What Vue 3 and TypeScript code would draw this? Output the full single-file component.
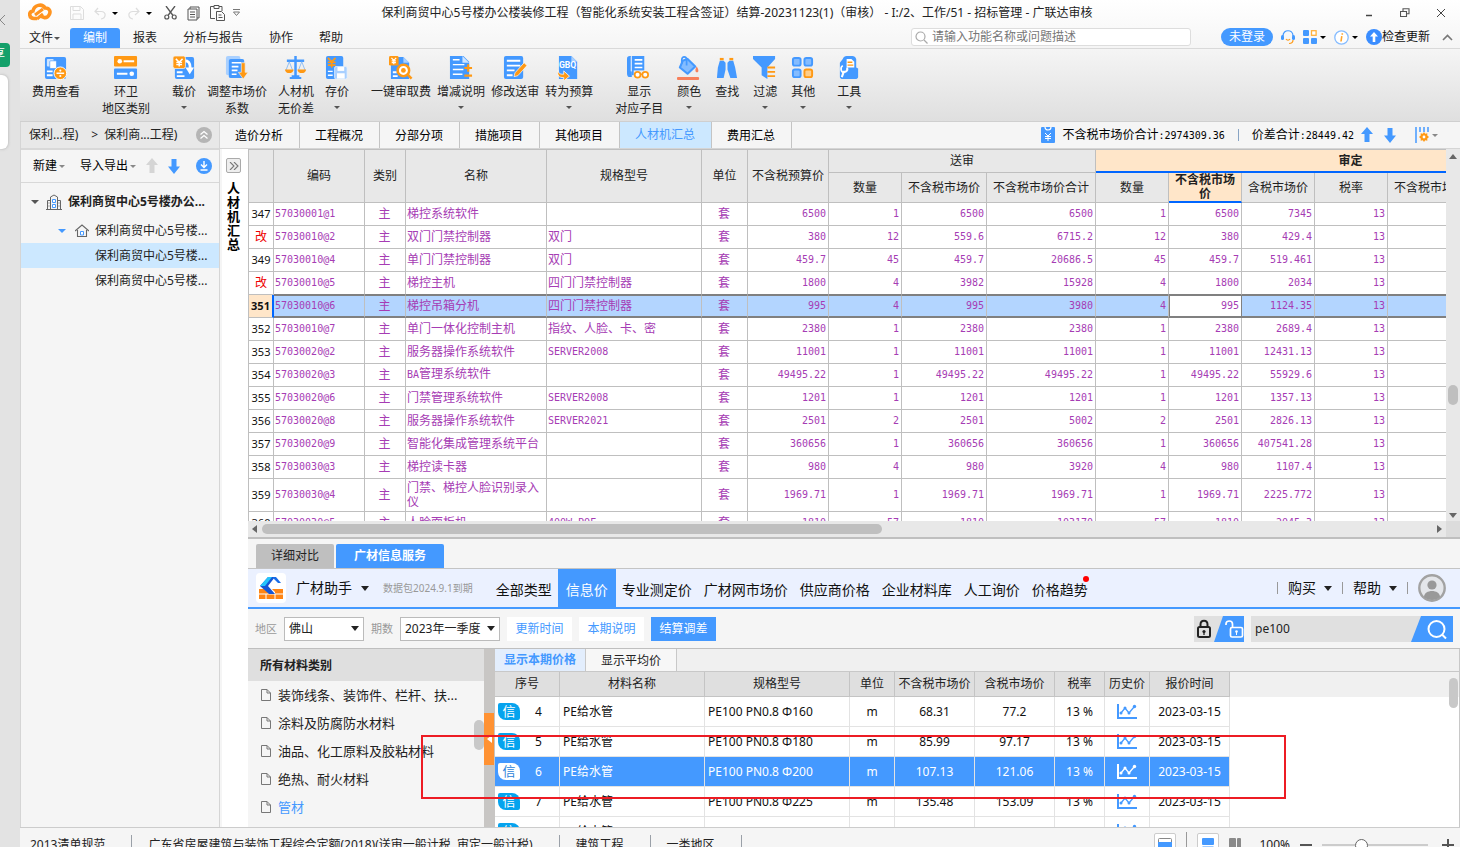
<script setup lang="ts">
import { ref } from 'vue'

interface Tool { label: string; sub?: string; icon: string; menu?: boolean }
interface MaterialRow {
  no: string
  code: string
  name: string
  latin?: string
  spec: string
  v: string[]
  changed?: boolean
  current?: boolean
  beforeCurrent?: boolean
  tall?: boolean
}
interface PriceRow { no: number; name: string; spec: string; unit: string; net: string; gross: string; rate: string; date: string; active?: boolean }

const B = '#4499ff'
const O = '#ff9914'

const glyphs: Record<string, string> = {
  view: `<rect x="1" y="1" width="22" height="23" rx="2" fill="${B}"/><rect x="3" y="3" width="7" height="8" rx="1" fill="#cfe5ff"/><rect x="6" y="5" width="7" height="8" rx="1" fill="#fff" stroke="${B}" stroke-width=".7"/><path d="M3 16h6M3 20h6" stroke="#fff" stroke-width="2"/><circle cx="17" cy="18" r="6.6" fill="${O}" stroke="#fff"/><path d="M13 18h8" stroke="#fff" stroke-width="1.6"/><circle cx="17" cy="15.2" r="1.1" fill="#fff"/><circle cx="17" cy="20.8" r="1.1" fill="#fff"/>`,
  region: `<rect width="24" height="11" rx="1" fill="${O}"/><rect y="13" width="24" height="11" rx="1" fill="${B}"/><circle cx="6" cy="5.5" r="2.4" fill="#fff"/><path d="M10 5.5h11M3 18.500h11" stroke="#fff" stroke-width="2"/><circle cx="18.500" cy="18.500" r="2.400" fill="#fff"/>`,
  load: `<rect x="3" y="1" width="20" height="23" rx="2" fill="${B}"/><path d="M5 17h6M5 21h8" stroke="#fff" stroke-width="2"/><path d="M13 5c5 0 6 3 6 8" fill="none" stroke="#fff" stroke-width="3"/><path d="M14 12h9l-4.500 7z" fill="#fff"/><rect x="1" y="0" width="13" height="13" rx="2" fill="${O}" stroke="#f2f2f2" stroke-width=".8"/><path d="M4 3l3.500 3.500L11 3M7.500 6.500V11M4.500 6.800h6M4.500 9h6" fill="none" stroke="#fff" stroke-width="1.500"/>`,
  adjust: `<rect x="1" y="0" width="15" height="20" rx="2" fill="#a9d0ff"/><rect x="4" y="3" width="16" height="20" rx="2" fill="${B}"/><path d="M7 7h10M7 11h7M7 15h6M7 19h5" stroke="#fff" stroke-width="1.700"/><path d="M17 7h4v10h3l-5 7-5-7h3z" fill="${O}" stroke="#eee" stroke-width=".7"/>`,
  balance: `<path d="M12 0v22M3 5h18" stroke="${B}" stroke-width="2.600"/><path d="M6 23h12M8 21h8" stroke="${B}" stroke-width="2"/><path d="M5.500 6L2 15M5.500 6l3.500 9M18.500 6L15 15m3.500-9L22 15" stroke="#84b8f5" stroke-width=".9" fill="none"/><path d="M1 14h9c0 5-9 5-9 0zM14 14h9c0 5-9 5-9 0z" fill="${O}"/>`,
  save: `<rect x="1" y="0" width="18" height="24" rx="2" fill="${B}"/><path d="M3 2l4 4 4-4M7 6v6M3 6.500h8M3 9.500h8" fill="none" stroke="${O}" stroke-width="1.800"/><path d="M3 16h5M3 20h5" stroke="#fff" stroke-width="1.500"/><rect x="10" y="11" width="13" height="13" rx="1.500" fill="#a9d0ff" stroke="#e8f2ff" stroke-width=".8"/><rect x="13" y="11.500" width="7" height="4" fill="#fff"/><rect x="12.500" y="18" width="8" height="5.500" fill="#fff"/>`,
  audit: `<path d="M2 1h13l6 6v17H2z" fill="${B}"/><path d="M15 1v6h6z" fill="#a9d0ff"/><path d="M4 17h4M4 21h5" stroke="#fff" stroke-width="2"/><circle cx="15" cy="15" r="6" fill="#fff" stroke="${O}" stroke-width="2.600"/><circle cx="15" cy="15" r="2.500" fill="${O}"/><path d="M19 19l4.500 4.500" stroke="${O}" stroke-width="2.600"/><rect x="0" y="0" width="10" height="10" rx="1.500" fill="${O}"/><path d="M2.500 2L5 4.500 7.500 2M5 4.500V8.500M2.800 5h4.400M2.800 6.900h4.400" fill="none" stroke="#fff" stroke-width="1.200"/>`,
  note: `<path d="M1 0h14l6 6v18H1z" fill="${B}"/><path d="M14 0v7h7z" fill="#cfe5ff"/><path d="M4 4h7M4 9h12M4 14h11M4 19h10" stroke="#fff" stroke-width="1.500"/><path d="M16 12.500h8M20 8.500v8M16 20.500h8" stroke="${O}" stroke-width="2.200"/>`,
  edit: `<rect x="1" y="0" width="20" height="24" rx="2" fill="${B}"/><path d="M4 5h14M4 10h14M4 15h8M4 20h6" stroke="#fff" stroke-width="2"/><path d="M22 7l3 3-9.500 10.500-4 1 1-4z" fill="${O}" stroke="#fff" stroke-width=".7"/>`,
  convert: `<path d="M2 0h13l6 6v18H2z" fill="${B}"/><path d="M15 0v6h6z" fill="#a9d0ff"/><text x="2" y="13" font-family="Roboto" font-size="9" font-weight="700" fill="#fff">GBQ</text><path d="M1 15c1 4 3 4 6 4v-3.500l6 5.500-6 5v-3.500c-5 0-7-2-6-7.500z" fill="${O}" stroke="#fff" stroke-width=".8"/>`,
  show: `<path d="M3 0h1v17H3c-2 0-3 1-3 2.500V3c0-2 1-3 3-3z" fill="${B}"/><path d="M0 18c0-1.500 1-2 3-2h2v6H3c-2 0-3-1-3-4z" fill="${B}"/><path d="M5 0h13v20H5z" fill="${B}"/><path d="M8 4h8M8 8h8M8 12h8" stroke="#fff" stroke-width="1.700"/><path d="M4.500 1v15" stroke="#cfe5ff"/><rect x="7" y="15" width="17" height="9" fill="#efefef"/><circle cx="11" cy="19.500" r="3" fill="#fff" stroke="${O}" stroke-width="1.800"/><circle cx="19" cy="19.500" r="3" fill="#fff" stroke="${O}" stroke-width="1.800"/><path d="M14 19h2" stroke="${O}" stroke-width="1.500"/>`,
  paint: `<path d="M11 3l8 8-8 7.500L3 12l3-7z" fill="#84bcff" stroke="${B}" stroke-width="2.200" stroke-linejoin="round"/><path d="M5 8V4c0-4 5-4 5 0v6" fill="none" stroke="${B}" stroke-width="1.800"/><path d="M20.500 11c2 3 2.500 6 .3 6s-2-3-.3-6z" fill="#f7805c"/><rect x="0" y="22" width="23" height="3" rx="1" fill="#f7805c"/>`,
  find: `<rect x="5" y="2" width="4" height="2.500" fill="${O}"/><rect x="15" y="2" width="4" height="2.500" fill="${O}"/><path d="M5 5h4l2 2v7l-2 9H2l1-11zM15 5h4l2 7 2 11h-7l-3-9V7z" fill="${B}"/>`,
  filter: `<path d="M0 0h23v3l-8 9v12l-6-4v-8L0 3z" fill="${B}"/><path d="M15 12h8M15 16.500h8M15 21h8" stroke="${O}" stroke-width="2"/>`,
  other: `<rect x="2" y="2" width="8" height="8" rx="2" fill="#84bcff" stroke="${B}" stroke-width="2"/><rect x="14" y="2" width="8" height="8" rx="2" fill="#84bcff" stroke="${B}" stroke-width="2"/><rect x="2" y="14" width="8" height="8" rx="2" fill="#84bcff" stroke="${B}" stroke-width="2"/><rect x="14" y="14" width="8" height="8" rx="2" fill="#ffce8a" stroke="${O}" stroke-width="2"/>`,
  tool: `<path d="M6 3c1-2 2-3 4-3h6c2 0 3 1 4 3v9l2 1v9c0 1-1 2-2 2H5c-1 0-2-1-2-2V7z" fill="${B}"/><path d="M10 3h5l3 3v6h-8z" fill="#fff"/><path d="M11 6.500h5M11 9.500h6" stroke="${O}" stroke-width="1.500"/><path d="M10.500 12c1 3-1 5-3.500 4.500L5 22" fill="none" stroke="#fff" stroke-width="2.200"/><path d="M6 10c-3 2-2 7 1 7" fill="none" stroke="#fff" stroke-width="1.800"/>`,
}

const toolGroups: { gap: 'wide' | 'mid' | 'tight'; tools: Tool[] }[] = [
  { gap: 'mid', tools: [{ label: '费用查看', icon: 'view' }] },
  { gap: 'mid', tools: [{ label: '环卫', sub: '地区类别', icon: 'region' }] },
  {
    gap: 'mid',
    tools: [
      { label: '载价', icon: 'load', menu: true },
      { label: '调整市场价', sub: '系数', icon: 'adjust' },
      { label: '人材机', sub: '无价差', icon: 'balance' },
      { label: '存价', icon: 'save', menu: true },
    ],
  },
  {
    gap: 'tight',
    tools: [
      { label: '一键审取费', icon: 'audit' },
      { label: '增减说明', icon: 'note', menu: true },
      { label: '修改送审', icon: 'edit' },
      { label: '转为预算', icon: 'convert', menu: true },
    ],
  },
  {
    gap: 'wide',
    tools: [
      { label: '显示', sub: '对应子目', icon: 'show' },
      { label: '颜色', icon: 'paint', menu: true },
      { label: '查找', icon: 'find' },
      { label: '过滤', icon: 'filter', menu: true },
      { label: '其他', icon: 'other', menu: true },
    ],
  },
  { gap: 'mid', tools: [{ label: '工具', icon: 'tool', menu: true }] },
]

const menus = ['编制', '报表', '分析与报告', '协作', '帮助']
const tabs = ['造价分析', '工程概况', '分部分项', '措施项目', '其他项目', '人材机汇总', '费用汇总']
const activeTab = ref('人材机汇总')

const columnWidths = ['c25', 'c91', 'c41', 'c141', 'c155', 'c46', 'c81', 'c73', 'c85', 'c109', 'c73', 'c73', 'c73', 'c73', 'c109', 'c109']

const rows: MaterialRow[] = [
  { no: '347', code: '57030001@1', name: '梯控系统软件', spec: '', v: ['6500', '1', '6500', '6500', '1', '6500', '7345', '13'] },
  { no: '改', code: '57030010@2', name: '双门门禁控制器', spec: '双门', v: ['380', '12', '559.6', '6715.2', '12', '380', '429.4', '13'], changed: true },
  { no: '349', code: '57030010@4', name: '单门门禁控制器', spec: '双门', v: ['459.7', '45', '459.7', '20686.5', '45', '459.7', '519.461', '13'] },
  { no: '改', code: '57030010@5', name: '梯控主机', spec: '四门门禁控制器', v: ['1800', '4', '3982', '15928', '4', '1800', '2034', '13'], changed: true, beforeCurrent: true },
  { no: '351', code: '57030010@6', name: '梯控吊箱分机', spec: '四门门禁控制器', v: ['995', '4', '995', '3980', '4', '995', '1124.35', '13'], current: true },
  { no: '352', code: '57030010@7', name: '单门一体化控制主机', spec: '指纹、人脸、卡、密', v: ['2380', '1', '2380', '2380', '1', '2380', '2689.4', '13'] },
  { no: '353', code: '57030020@2', name: '服务器操作系统软件', spec: 'SERVER2008', v: ['11001', '1', '11001', '11001', '1', '11001', '12431.13', '13'] },
  { no: '354', code: '57030020@3', latin: 'BA', name: '管理系统软件', spec: '', v: ['49495.22', '1', '49495.22', '49495.22', '1', '49495.22', '55929.6', '13'] },
  { no: '355', code: '57030020@6', name: '门禁管理系统软件', spec: 'SERVER2008', v: ['1201', '1', '1201', '1201', '1', '1201', '1357.13', '13'] },
  { no: '356', code: '57030020@8', name: '服务器操作系统软件', spec: 'SERVER2021', v: ['2501', '2', '2501', '5002', '2', '2501', '2826.13', '13'] },
  { no: '357', code: '57030020@9', name: '智能化集成管理系统平台', spec: '', v: ['360656', '1', '360656', '360656', '1', '360656', '407541.28', '13'] },
  { no: '358', code: '57030030@3', name: '梯控读卡器', spec: '', v: ['980', '4', '980', '3920', '4', '980', '1107.4', '13'] },
  { no: '359', code: '57030030@4', name: '门禁、梯控人脸识别录入仪', spec: '', v: ['1969.71', '1', '1969.71', '1969.71', '1', '1969.71', '2225.772', '13'], tall: true },
  { no: '360', code: '57030030@5', name: '人脸面板机', spec: '400W POE', v: ['1810', '57', '1810', '103170', '57', '1810', '2045.3', '13'] },
]

const isLatin = (s: string): boolean => /^[\x20-\x7e]*$/.test(s)

const helperNav = ['全部类型', '信息价', '专业测定价', '广材网市场价', '供应商价格', '企业材料库', '人工询价', '价格趋势']
const categories = ['装饰线条、装饰件、栏杆、扶...', '涂料及防腐防水材料', '油品、化工原料及胶粘材料', '绝热、耐火材料', '管材']

const prices: PriceRow[] = [
  { no: 4, name: 'PE给水管', spec: 'PE100 PN0.8 Φ160', unit: 'm', net: '68.31', gross: '77.2', rate: '13 %', date: '2023-03-15' },
  { no: 5, name: 'PE给水管', spec: 'PE100 PN0.8 Φ180', unit: 'm', net: '85.99', gross: '97.17', rate: '13 %', date: '2023-03-15' },
  { no: 6, name: 'PE给水管', spec: 'PE100 PN0.8 Φ200', unit: 'm', net: '107.13', gross: '121.06', rate: '13 %', date: '2023-03-15', active: true },
  { no: 7, name: 'PE给水管', spec: 'PE100 PN0.8 Φ225', unit: 'm', net: '135.48', gross: '153.09', rate: '13 %', date: '2023-03-15' },
  { no: 8, name: 'PE给水管', spec: '', unit: '', net: '', gross: '', rate: '', date: '' },
]

const keyword = ref('pe100')
const zoomLevel = ref(36)
</script>

<template>
  <div class="screen">
    <aside class="edge">
      <svg class="edge-back" width="6" height="12" viewBox="0 0 6 12"><path d="M5 1L0 6l5 5" fill="none" stroke="#888" /></svg>
      <span class="share">享</span>
      <span class="edge-card"></span>
    </aside>

    <div class="main">
      <header class="top">
        <div class="titlebar">
          <div class="quick">
            <svg class="brand" width="24" height="20" viewBox="0 0 24 20"><path d="M9 15.500H6C1 15.500 0 9 5 8c1-6 9-8 12-3 5 0 6 4 4 7-2 4-7 3-9 0" fill="none" stroke="#ff9420" stroke-width="3.600" /><path d="M15 6l-8 6M9 16l6-5" stroke="#ff9420" stroke-width="3" /></svg>
            <button class="ib" aria-label="保存"><svg width="14" height="14" viewBox="0 0 14 14"><path d="M.5.500h10l3 3v10H.5zM3 .5v4h7v-4M3 13.500V8h8v5.500" fill="none" stroke="#ddd" /></svg></button>
            <button class="ib undo" aria-label="撤销"><svg width="12" height="13" viewBox="0 0 12 13"><path d="M4 1L1 4.500 5 8M1 4.500h6c6 0 5 7 0 7.500" fill="none" stroke="#ddd" stroke-width="1.200" /></svg><i class="tri black"></i></button>
            <button class="ib undo" aria-label="重做"><svg width="12" height="13" viewBox="0 0 12 13"><path d="M8 1l3 3.500L7 8M11 4.500H5c-6 0-5 7 0 7.500" fill="none" stroke="#ddd" stroke-width="1.200" /></svg><i class="tri black"></i></button>
            <button class="ib" aria-label="剪切"><svg width="13" height="14" viewBox="0 0 13 14"><path d="M2 0l7 9.500M11 0L4 9.500" stroke="#555" stroke-width="1.300" /><circle cx="2.800" cy="11" r="2" fill="none" stroke="#555" stroke-width="1.200" /><circle cx="10.200" cy="11" r="2" fill="none" stroke="#555" stroke-width="1.200" /></svg></button>
            <button class="ib" aria-label="复制"><svg width="13" height="15" viewBox="0 0 13 15"><path d="M3 3V1h9v11h-2M1 3h9v11H1zM3 6h5M3 8.500h5M3 11h5" fill="none" stroke="#555" /></svg></button>
            <button class="ib" aria-label="粘贴"><svg width="15" height="16" viewBox="0 0 15 16"><path d="M5 13.500H.5v-12H4M9 1.500h3V6M4 .500h5v3H4zM6.500 6.500h5l3 3v6h-8zM8.500 10h3M8.500 12.500h4" fill="none" stroke="#555" /></svg></button>
            <svg class="more" width="7" height="8" viewBox="0 0 7 8"><path d="M0 .5h7" stroke="#777" /><path d="M.5 3h6L3.500 6.500z" fill="none" stroke="#777" /></svg>
          </div>
          <div class="title">保利商贸中心5号楼办公楼装修工程（智能化系统安装工程含签证）结算-20231123(1)（审核） - I:/2、工作/51 - 招标管理 - 广联达审核</div>
          <div class="window">
            <button aria-label="最小化"><svg width="10" height="10" viewBox="0 0 10 10"><path d="M2 7.500h6" stroke="#444" stroke-width="1.500" /></svg></button>
            <button aria-label="还原"><svg width="10" height="10" viewBox="0 0 10 10"><path d="M.5 3.500h6v5h-6zM3 3V.8h6v5H7" fill="none" stroke="#555" stroke-width="1.100" /></svg></button>
            <button aria-label="关闭"><svg width="10" height="10" viewBox="0 0 10 10"><path d="M1 1l8 8M9 1L1 9" stroke="#444" /></svg></button>
          </div>
        </div>
        <div class="menubar">
          <nav class="menus">
            <button class="file">文件<i class="tri"></i></button>
            <button v-for="m in menus" :key="m" :class="{ on: m === '编制' }">{{ m }}</button>
          </nav>
          <div class="account">
            <label class="find">
              <svg width="13" height="13" viewBox="0 0 13 13"><circle cx="5.500" cy="5.500" r="4.500" fill="none" stroke="#aaa" stroke-width="1.200" /><path d="M9 9l3.500 3.500" stroke="#aaa" stroke-width="1.300" /></svg>
              <input type="text" placeholder="请输入功能名称或问题描述" aria-label="功能搜索" />
            </label>
            <button class="login">未登录</button>
            <svg width="14" height="15" viewBox="0 0 14 15"><path d="M2 6c0-7 10-7 10 0" fill="none" stroke="#4499ff" stroke-width="1.200" /><rect x="0" y="5" width="3" height="5" rx="1.500" fill="#4499ff" /><rect x="11" y="5" width="3" height="5" rx="1.500" fill="#4499ff" /><path d="M12 10c0 3-2 3.500-4 3.500M5 9c1 1.500 3 1.500 4 0" fill="none" stroke="#ff9914" stroke-width="1.200" /></svg>
            <span class="pair"><svg width="14" height="14" viewBox="0 0 14 14"><rect width="6" height="6" rx="1" fill="#4499ff" /><rect x="8.500" y=".7" width="4.600" height="4.600" fill="#fff" stroke="#ffb13d" stroke-width="1.300" /><rect y="8" width="6" height="6" rx="1" fill="#4499ff" /><rect x="8" y="8" width="6" height="6" rx="1" fill="#4499ff" /></svg><i class="tri black"></i></span>
            <span class="pair"><svg width="15" height="15" viewBox="0 0 15 15"><circle cx="7.500" cy="7.500" r="6.700" fill="#fff" stroke="#86bcff" stroke-width="1.300" /><path d="M8.300 3.200v1.600M7.800 6.200L7 11.500" stroke="#ffa62e" stroke-width="1.600" /></svg><i class="tri black"></i></span>
            <button class="update"><svg width="16" height="16" viewBox="0 0 16 16"><circle cx="8" cy="8" r="8" fill="#3a8dff" /><path d="M8 3l4 4.500H9.300V13H6.700V7.500H4z" fill="#fff" /></svg>检查更新</button>
            <svg width="11" height="7" viewBox="0 0 11 7"><path d="M1 6l4.500-4.500L10 6" fill="none" stroke="#777" stroke-width="1.600" /></svg>
          </div>
        </div>
      </header>

      <div class="ribbon">
        <div v-for="(g, gi) in toolGroups" :key="gi" class="group" :class="g.gap">
          <button v-for="t in g.tools" :key="t.label" class="tool">
            <svg width="24" height="24" viewBox="0 0 25 25" v-html="glyphs[t.icon]"></svg>
            <span>{{ t.label }}</span>
            <span v-if="t.sub">{{ t.sub }}</span>
            <i v-if="t.menu" class="tri"></i>
          </button>
        </div>
      </div>

      <div class="body">
        <aside class="sidebar">
          <div class="crumb">
            <span>保利...程)</span><span class="gt">&gt;</span><span>保利商...工程)</span>
            <svg class="end" width="16" height="16" viewBox="0 0 16 16"><circle cx="8" cy="8" r="8" fill="#b5b5b5" /><path d="M4.500 7.500L8 4.500l3.500 3M4.500 11.500L8 8.500l3.500 3" fill="none" stroke="#fff" stroke-width="1.300" /></svg>
          </div>
          <div class="actions">
            <button>新建<i class="tri grey"></i></button>
            <button>导入导出<i class="tri grey"></i></button>
            <svg width="12" height="16" viewBox="0 0 12 16"><path d="M6 0l6 7H8.500v8h-5V7H0z" fill="#d5d5d5" /></svg>
            <svg class="dn" width="12" height="16" viewBox="0 0 12 16"><path d="M6 16L0 8.500h3.500V1h5v7.500H12z" fill="#4499ff" /></svg>
            <svg class="end" width="16" height="16" viewBox="0 0 16 16"><circle cx="8" cy="8" r="8" fill="#4499ff" /><path d="M8 3v6M5 6.500l3 3 3-3M4.500 12h7" fill="none" stroke="#fff" stroke-width="1.400" /></svg>
          </div>
          <ul class="tree">
            <li class="root">
              <i class="tri big"></i>
              <svg width="16" height="16" viewBox="0 0 16 16"><path d="M4.500 15V3l3.500-2 3.500 2v12M4 6.500H1.500V15M12 6.500h2.500V15M0 15.500h16M2.500 9h1M2.500 12h1M12.500 9h1M12.500 12h1" fill="none" stroke="#666" /><path d="M6.500 5.500h3v3h-3zM6.500 10.500h3v3h-3z" fill="#fff" stroke="#4499ff" /></svg>
              <span>保利商贸中心5号楼办公...</span>
            </li>
            <li class="branch">
              <i class="tri big blue"></i>
              <svg width="14" height="13" viewBox="0 0 14 13"><path d="M0 7l7-6 7 6M2.500 6v6.500h9V6" fill="none" stroke="#666" stroke-width="1.100" /><path d="M5.500 7.500h3v3.500h-3z" fill="#fff" stroke="#4499ff" /></svg>
              <span>保利商贸中心5号楼...</span>
            </li>
            <li class="leaf on"><span>保利商贸中心5号楼...</span></li>
            <li class="leaf"><span>保利商贸中心5号楼...</span></li>
          </ul>
        </aside>

        <section class="work">
          <div class="tabbar">
            <button v-for="t in tabs" :key="t" class="tab" :class="{ on: t === activeTab }" @click="activeTab = t">{{ t }}</button>
            <div class="totals">
              <svg width="14" height="16" viewBox="0 0 14 16"><rect width="14" height="16" rx="1" fill="#4499ff" /><path d="M4 0c0 4 6 4 6 0" fill="none" stroke="#fff" stroke-width="1.200" /><path d="M4 6l3 3 3-3M7 9v5M4 9.500h6M4 11.500h6" fill="none" stroke="#fff" /></svg>
              <span>不含税市场价合计<b class="n">:2974309.36</b></span>
              <i class="bar"></i>
              <span>价差合计<b class="n">:28449.42</b></span>
              <svg class="up" width="12" height="16" viewBox="0 0 12 16"><path d="M6 0l6 7H8.500v8h-5V7H0z" fill="#4499ff" /></svg>
              <svg class="dn" width="12" height="16" viewBox="0 0 12 16"><path d="M6 16L0 8.500h3.500V1h5v7.500H12z" fill="#4499ff" /></svg>
              <span class="pair"><svg width="14" height="16" viewBox="0 0 14 16"><path d="M1 0v16M5 0v5M9 0v5M13 0v5" stroke="#4499ff" stroke-width="1.500" /><path d="M9 5l1.200 1.700 2.100-.4v2.200L14 10l-1.700 1.500v2.200l-2.100-.4L9 15l-1.200-1.700-2.100.4v-2.200L4 10l1.700-1.500V6.300l2.100.4z" fill="#ff9914" /><circle cx="9" cy="10" r="1.400" fill="#fff" /></svg><i class="tri grey"></i></span>
            </div>
          </div>

          <div class="under">
            <div class="rail">
              <button aria-label="展开"><svg width="10" height="8" viewBox="0 0 10 8"><path d="M1 0l4 4-4 4M5 0l4 4-4 4" fill="none" stroke="#777" stroke-width="1.100" /></svg></button>
              <strong>人材机汇总</strong>
            </div>

            <div class="panes">
              <div class="sheet">
                <div class="sheet-view">
                  <table>
                    <colgroup><col v-for="(c, i) in columnWidths" :key="i" :class="c" /></colgroup>
                    <thead>
                      <tr class="h1">
                        <th rowspan="2"></th><th rowspan="2">编码</th><th rowspan="2">类别</th><th rowspan="2">名称</th><th rowspan="2">规格型号</th><th rowspan="2">单位</th><th rowspan="2">不含税预算价</th>
                        <th colspan="3">送审</th><th colspan="6" class="hot">审定</th>
                      </tr>
                      <tr class="h2">
                        <th>数量</th><th>不含税市场价</th><th>不含税市场价合计</th><th>数量</th><th class="hot">不含税市场价</th><th>含税市场价</th><th>税率</th><th class="nw">不含税市场价合计</th><th></th>
                      </tr>
                    </thead>
                    <tbody>
                      <tr v-for="r in rows" :key="r.code" :class="{ current: r.current, before: r.beforeCurrent, tall: r.tall }">
                        <td class="no" :class="{ changed: r.changed }">{{ r.no }}</td>
                        <td class="n">{{ r.code }}</td>
                        <td class="mid">主</td>
                        <td><span v-if="r.latin" class="n">{{ r.latin }}</span>{{ r.name }}</td>
                        <td :class="{ n: isLatin(r.spec) }">{{ r.spec }}</td>
                        <td class="mid">套</td>
                        <td v-for="(x, i) in r.v" :key="i" class="n num" :class="{ focus: r.current && i === 5 }">{{ x }}</td>
                        <td></td><td></td>
                      </tr>
                    </tbody>
                  </table>
                </div>
                <div class="vbar"><i class="tri upw"></i><i class="thumb"></i><i class="tri sc"></i></div>
                <div class="hbar"><i class="tri lf"></i><div class="track"><i class="thumb"></i></div><i class="tri rt"></i></div>
                <div class="corner"></div>
              </div>

              <div class="info">
                <div class="info-tabs"><button>详细对比</button><button class="on">广材信息服务</button></div>
                <div class="helper">
                  <svg class="hlogo" width="30" height="30" viewBox="0 0 30 30"><rect width="30" height="30" rx="4" fill="#fff" /><path d="M3 16h24v10H3z" fill="#ff8514" /><path d="M3 21h24M10 21v5M19 21v5M15 16v5" stroke="#fff" /><path d="M12 4h7l6 6h-4l-3-3-5 6 6 6v2h-5L4 13z" fill="#fff" /><path d="M12 4h7l-7 9 7 8h-6L4 13z" fill="#1557d6" /><path d="M12 4h4l-7 9-5 0z" fill="#25c5fb" /><path d="M17 4h3l5 6h-3l-4-4z" fill="#176be8" /></svg>
                  <button class="who">广材助手<i class="tri dark"></i></button>
                  <small>数据包2024.9.1到期</small>
                  <nav>
                    <button v-for="n in helperNav" :key="n" :class="{ on: n === '信息价', hint: n === '价格趋势' }">{{ n }}</button>
                  </nav>
                  <div class="me">
                    <i class="bar"></i><button>购买<i class="tri dark"></i></button>
                    <i class="bar"></i><button>帮助<i class="tri dark"></i></button><i class="bar"></i>
                    <svg width="28" height="28" viewBox="0 0 28 28"><circle cx="14" cy="14" r="12.700" fill="#e4e6ea" stroke="#a2a2a2" stroke-width="2.400" /><circle cx="14" cy="11" r="4.600" fill="#999" /><path d="M6 23c0-8 16-8 16 0-4 4-12 4-16 0z" fill="#999" /></svg>
                  </div>
                </div>
                <div class="filters">
                  <label for="area">地区</label>
                  <span class="sel area"><select id="area"><option>佛山</option></select><i class="tri dark"></i></span>
                  <label for="term">期数</label>
                  <span class="sel term"><select id="term"><option>2023年一季度</option></select><i class="tri dark"></i></span>
                  <button>更新时间</button><button>本期说明</button><button class="on">结算调差</button>
                  <span class="lock">
                    <svg width="50" height="26" viewBox="0 0 50 26"><rect width="50" height="26" fill="#e0e0e0" /><path d="M29 0h21v26H20z" fill="#4499ff" /><rect x="4" y="11" width="12" height="10" rx="1.500" fill="none" stroke="#222" stroke-width="2" /><path d="M6.500 11V8.500c0-5 7-5 7 0V11" fill="none" stroke="#222" stroke-width="2" /><circle cx="10" cy="15.500" r="1.600" fill="#222" /><path d="M10 15v4" stroke="#222" stroke-width="1.300" /><rect x="36.500" y="11.500" width="12" height="9.500" rx="1.500" fill="none" stroke="#fff" stroke-width="1.700" /><path d="M32 9V8c0-4 6.500-4 6.500 0v3.500" fill="none" stroke="#fff" stroke-width="1.700" /><circle cx="42.500" cy="15.500" r="1.300" fill="#fff" /><path d="M42.500 15v4" stroke="#fff" /></svg>
                  </span>
                  <span class="search">
                    <input v-model="keyword" type="text" aria-label="材料关键字" />
                    <button aria-label="搜索"><svg width="42" height="26" viewBox="0 0 42 26"><path d="M10 0h32v26H0z" fill="#4499ff" /><circle cx="25.500" cy="13" r="8" fill="none" stroke="#fff" stroke-width="2" /><path d="M31 18.500l4 4" stroke="#fff" stroke-width="2" /></svg></button>
                  </span>
                </div>

                <div class="lower">
                  <div class="cats">
                    <h3>所有材料类别</h3>
                    <ul>
                      <li v-for="c in categories" :key="c" :class="{ on: c === '管材' }">
                        <svg width="10" height="12" viewBox="0 0 10 12"><path d="M.5.500H6L9.500 4v7.500h-9zM6 .5V4h3.500" fill="none" stroke="#777" /></svg>{{ c }}
                      </li>
                    </ul>
                    <i class="thumb"></i>
                  </div>
                  <div class="split"><span><i class="tri lf white"></i></span></div>
                  <div class="prices">
                    <div class="ptabs"><button class="on">显示本期价格</button><button>显示平均价</button></div>
                    <div class="ptable">
                      <table>
                        <colgroup><col class="p65" /><col class="p145" /><col class="p145" /><col class="p45" /><col class="p80" /><col class="p80" /><col class="p50" /><col class="p45" /><col class="p80" /></colgroup>
                        <thead><tr><th>序号</th><th>材料名称</th><th>规格型号</th><th>单位</th><th>不含税市场价</th><th>含税市场价</th><th>税率</th><th>历史价</th><th>报价时间</th></tr></thead>
                        <tbody>
                          <tr v-for="p in prices" :key="p.no" :class="{ on: p.active }">
                            <td><div class="seq"><span class="badge">信</span>{{ p.no }}</div></td>
                            <td class="l">{{ p.name }}</td><td class="l">{{ p.spec }}</td><td>{{ p.unit }}</td><td>{{ p.net }}</td><td>{{ p.gross }}</td><td>{{ p.rate }}</td>
                            <td><svg width="20" height="15" viewBox="0 0 20 15"><path d="M1 0v14h19" fill="none" stroke="currentColor" stroke-width="2" /><path d="M4 9l4-5 4 5 5-6" fill="none" stroke="currentColor" stroke-width="1.300" /><g fill="currentColor"><circle cx="4" cy="9" r="1.500" /><circle cx="8" cy="4" r="1.500" /><circle cx="12" cy="9" r="1.500" /><circle cx="17.500" cy="2.500" r="1.700" /></g></svg></td>
                            <td>{{ p.date }}</td>
                          </tr>
                        </tbody>
                      </table>
                      <i class="thumb"></i>
                    </div>
                  </div>
                  <div class="marker"></div>
                </div>
              </div>
            </div>
          </div>
        </section>
      </div>

      <footer class="status">
        <span>2013清单规范</span><span>广东省房屋建筑与装饰工程综合定额(2018)(送审一般计税&nbsp; 审定一般计税)</span><span>建筑工程</span><span>一类地区</span>
        <div class="view">
          <button class="box" aria-label="列表视图"><svg width="14" height="14" viewBox="0 0 14 14"><rect x=".5" y=".5" width="13" height="13" rx="1" fill="#fff" stroke="#888" /><path d="M0 4h14v10H0z" fill="#4499ff" /><path d="M0 10h14" stroke="#fff" /></svg></button>
          <i class="bar"></i>
          <button class="box" aria-label="上下布局"><svg width="12" height="14" viewBox="0 0 12 14"><rect width="12" height="7" rx="1" fill="#4499ff" /><rect y="8.500" width="12" height="5" rx="1" fill="#4499ff" /></svg></button>
          <button aria-label="左右布局"><svg width="12" height="14" viewBox="0 0 12 14"><rect width="7" height="14" rx="1" fill="#8a8a8a" /><rect x="8" width="4" height="14" rx="1" fill="#8a8a8a" /></svg></button>
          <span class="pct">100%</span>
          <button aria-label="缩小"><svg width="12" height="12" viewBox="0 0 12 12"><path d="M0 6h12" stroke="#555" stroke-width="2" /></svg></button>
          <input v-model="zoomLevel" type="range" min="0" max="100" aria-label="缩放" />
          <button aria-label="放大"><svg width="12" height="12" viewBox="0 0 12 12"><path d="M0 6h12M6 0v12" stroke="#555" stroke-width="2" /></svg></button>
        </div>
      </footer>
    </div>
  </div>
</template>

<style>
html, body { background: #f5f5f5; }
</style>

<style scoped>
.screen { display: flex; height: 100vh; overflow: hidden; font: 12px/16px "Noto Sans", "Noto Sans CJK SC", sans-serif; color: #222; }
.screen * { box-sizing: border-box; }
button { font: inherit; color: inherit; border: 0; background: none; padding: 0; white-space: nowrap; }
input, select { font: inherit; color: inherit; }
ul { list-style: none; margin: 0; padding: 0; }
svg { display: block; flex: none; }
.tri { display: inline-block; flex: none; width: 0; height: 0; border: 3px solid transparent; border-top: 3px solid #555; border-bottom: 0; }
.tri.black { border-top-color: #000; }
.tri.grey { border-top-color: #888; }
.tri.big { border-width: 4px 4px 0; }
.tri.blue { border-top-color: #4499ff; }
.tri.dark { border-width: 5px 4px 0; border-top-color: #222; }
.tri.sc { border-width: 5px 4px 0; border-top-color: #666; }
.tri.upw { border: 4px solid transparent; border-top: 0; border-bottom: 5px solid #666; }
.tri.lf { border: 4px solid transparent; border-left: 0; border-right: 5px solid #666; }
.tri.rt { border: 4px solid transparent; border-right: 0; border-left: 5px solid #666; }
.tri.white { border-right-color: #fff; }
.bar { width: 1px; height: 12px; background: #999; flex: none; }
.pair { display: flex; align-items: center; gap: 3px; }

.edge { flex: 0 0 20px; background: #e3e3e3; overflow: hidden; display: flex; flex-direction: column; align-items: flex-start; }
.edge-back { margin: 14px 0 0; }
.share { margin-top: 17px; width: 10px; height: 24px; line-height: 22px; background: #13a06a; color: #fff; border-radius: 0 4px 4px 0; display: flex; justify-content: flex-end; padding-right: 5px; overflow: hidden; }
.edge-card { margin-top: 8px; width: 8px; height: 74px; background: #fff; border-radius: 0 6px 6px 0; box-shadow: 0 0 3px #aaa; }

.main { flex: 1; min-width: 0; height: calc(100vh + 15px); display: flex; flex-direction: column; background: #f5f5f5; }
.top { flex: none; background: linear-gradient(#fff, #f5f5f5); border-bottom: 1px solid #d9d9d9; }
.titlebar { height: 26px; display: flex; align-items: center; padding: 0 14px 0 8px; }
.quick { flex: 1; display: flex; align-items: center; gap: 10px; }
.brand { margin-right: 8px; }
.ib { display: flex; align-items: center; gap: 6px; }
.quick .undo { margin-right: 2px; }
.undo + .undo { margin-left: -2px; }
.quick .more { margin-left: -2px; }
.title { white-space: nowrap; }
.window { flex: 1; display: flex; justify-content: flex-end; gap: 26px; }
.menubar { height: 22px; display: flex; align-items: flex-end; justify-content: space-between; padding-right: 7px; }
.menus { display: flex; height: 20px; }
.menus button { padding: 0 13px; height: 20px; }
.menus .file { padding: 0 10px 0 9px; display: flex; align-items: center; gap: 1px; }
.menus .on { background: #4499ff; color: #fff; border-radius: 3px 3px 0 0; }
.account { display: flex; align-items: center; height: 22px; gap: 8px; color: #111; }
.find { display: flex; align-items: center; gap: 4px; width: 280px; height: 18px; padding: 0 3px; background: #fff; border: 1px solid #ddd; border-radius: 3px; margin-right: 22px; }
.find input { flex: 1; min-width: 0; border: 0; outline: 0; padding: 0; background: none; height: 16px; }
.find input::placeholder { color: #777; opacity: 1; }
.login { width: 52px; height: 18px; line-height: 18px; border-radius: 9px; background: #4499ff; color: #fff; }
.update { display: flex; align-items: center; margin-right: 4px; }

.ribbon { flex: none; height: 73px; display: flex; gap: 22px; padding: 7px 12px 0; background: linear-gradient(#f5f5f5, #dfdfdf); border-bottom: 1px solid #cfcfcf; }
.group { display: flex; gap: 11px; align-items: flex-start; }
.group.tight { gap: 6px; }
.group.wide { gap: 14px; }
.tool { display: flex; flex-direction: column; align-items: center; line-height: 17px; }
.tool svg { margin-bottom: 3px; }
.tool .tri { margin-top: 6px; }

.body { flex: 1; min-height: 0; display: flex; border-bottom: 1px solid #ccc; }
.sidebar { flex: 0 0 200px; border-left: 1px solid #d5d5d5; border-right: 1px solid #d5d5d5; display: flex; flex-direction: column; background: #f5f5f5; }
.crumb { height: 28px; display: flex; align-items: center; padding: 0 7px 0 8px; background: #e8e8e8; border-bottom: 2px solid #d8d8d8; white-space: nowrap; }
.gt { margin: 0 6px 0 13px; }
.end { margin-left: auto; }
.actions { height: 33px; display: flex; align-items: center; padding: 0 7px 0 12px; border-bottom: 1px solid #d8d8d8; color: #000; }
.actions button { display: flex; align-items: center; gap: 2px; margin-right: 15px; }
.actions button + button { margin-right: 10px; }
.actions .dn { margin-left: 10px; }
.tree { padding-top: 2px; white-space: nowrap; }
.tree li { height: 25px; display: flex; align-items: center; }
.tree .root { height: 33px; padding-left: 10px; font-weight: 700; }
.tree .root svg { margin: 0 6px 0 7px; }
.tree .branch { padding-left: 37px; }
.tree .branch svg { margin: 0 6px 0 9px; }
.tree .leaf { padding-left: 74px; }
.tree .on { background: #cce8ff; }

.work { flex: 1; min-width: 0; display: flex; flex-direction: column; }
.tabbar { height: 27px; flex: none; display: flex; border-bottom: 1px solid #d5d5d5; color: #000; }
.tab { padding: 2px 16px 0 15px; border-right: 1px solid #c4c4c4; }
.tab.on { background: #cce8ff; color: #4499ff; padding-top: 0; }
.totals { margin-left: auto; display: flex; align-items: center; gap: 13px; padding-right: 22px; white-space: nowrap; }
.totals svg { margin-right: -5px; }
.totals .up { margin: 0 -4px 0 -6px; }
.totals .dn { margin: 0 6px 0 2px; }
.totals .pair svg { margin: 0; }
.totals .bar { background: #88a4c4; }
.n { font-family: "DejaVu Sans Mono", monospace; font-size: 10px; font-weight: 400; }

.under { flex: 1; min-height: 0; display: flex; }
.rail { flex: 0 0 28px; background: #fff; border-left: 2px solid #f5f5f5; display: flex; flex-direction: column; align-items: center; padding: 9px 3px 0 0; }
.rail button { width: 15px; height: 15px; border: 1px solid #aaa; border-radius: 2px; background: #eee; display: grid; place-items: center; }
.rail strong { width: 13px; margin-top: 8px; font-size: 13px; line-height: 14px; color: #000; overflow-wrap: anywhere; }
.panes { flex: 1; min-width: 0; display: flex; flex-direction: column; }

.sheet { flex: 1; min-height: 0; display: grid; grid-template: minmax(0, 1fr) 16px / minmax(0, 1fr) 14px; border-bottom: 2px solid #bfbfbf; }
.sheet-view { overflow: hidden; background: #fff; }
table { border-collapse: separate; border-spacing: 0; table-layout: fixed; }
.sheet-view table { width: 1358px; border-left: 1px solid #bfbfbf; border-top: 1px solid #bfbfbf; }
.c25 { width: 25px; } .c41 { width: 41px; } .c46 { width: 46px; } .c73 { width: 73px; } .c81 { width: 81px; } .c85 { width: 85px; }
.c91 { width: 91px; } .c109 { width: 109px; } .c141 { width: 141px; } .c155 { width: 155px; }
.sheet th { background: #e8e8e8; border: solid #bfbfbf; border-width: 0 1px 1px 0; font-weight: 400; padding: 0; line-height: 14px; }
.sheet .h1 th { height: 23px; }
.sheet .h2 th { height: 30px; }
.sheet .h2 .nw { white-space: nowrap; }
.sheet th.hot { background: #ffe6c9; font-weight: 700; border-bottom: 2px solid #0066ff; }
.sheet .h2 th.hot { padding: 0 2px; }
.sheet td { height: 23px; border: solid #bfbfbf; border-width: 0 1px 1px 0; padding: 0 2px 1px 1px; line-height: 14px; color: #a63cb4; }
.sheet .tall td { height: 33px; }
.sheet td.mid { text-align: center; }
.sheet td.num { text-align: right; }
.sheet td.no { color: #111; text-align: center; padding: 0; font-size: 11px; }
.sheet td.changed { color: #e00; font-size: 12px; }
.sheet .before td:not(.no) { border-bottom-color: #808080; }
.sheet .current td { background: #b3d5ff; border-top: 1px solid #808080; border-bottom: 2px solid #808080; padding-bottom: 0; }
.sheet .current td.no { background: #ffe6c9; border-top: 0; border-bottom: 1px solid #bfbfbf; border-right: 2px solid #0066ff; font-weight: 700; }
.sheet .current td.focus { background: #fff; border-right-color: #808080; box-shadow: inset 1px 0 #808080; }
.vbar { background: #e8e8e8; display: flex; flex-direction: column; align-items: center; padding: 5px 0 3px; }
.vbar .thumb { width: 10px; height: 20px; border-radius: 5px; background: #bfbfbf; margin: 226px 0 auto; }
.hbar { background: #e8e8e8; display: flex; align-items: center; gap: 5px; padding: 0 4px; }
.track { flex: 1; }
.track .thumb { display: block; width: 53%; height: 10px; border-radius: 5px; background: #bfbfbf; }
.corner { background: #dcdcdc; }

.info { flex: 0 0 288px; display: flex; flex-direction: column; min-width: 0; min-height: 0; }
.info-tabs { flex: none; height: 30px; padding: 5px 8px 0; display: flex; gap: 2px; border-bottom: 1px solid #c4c4c4; }
.info-tabs button { padding: 0 15px; background: #bfbfbf; border-radius: 2px 2px 0 0; }
.info-tabs .on { background: #4499ff; color: #fff; font-weight: 700; padding: 0 18px; }
.helper { flex: none; height: 40px; display: flex; align-items: center; padding: 0 14px 0 8px; background: #ebf1ff; border-bottom: 2px solid #4499ff; font-size: 14px; color: #111; }
.who { display: flex; align-items: center; gap: 9px; margin-left: 10px; }
.helper small { font-size: 10px; color: #999; margin: 0 17px 0 14px; white-space: nowrap; }
.helper nav { display: flex; align-self: stretch; }
.helper nav button { padding: 3px 6px 0; position: relative; }
.helper nav .on { background: #4499ff; color: #fff; padding: 3px 8px 0; }
.helper nav .hint::after { content: ""; position: absolute; right: 5px; top: 7px; width: 6px; height: 6px; border-radius: 3px; background: #f00; }
.me { margin-left: auto; display: flex; align-items: center; gap: 10px; }
.me button { display: flex; align-items: center; gap: 8px; }
.filters { flex: none; height: 40px; display: flex; align-items: center; gap: 7px; padding: 0 7px 0; border-bottom: 1px solid #bfbfbf; }
.filters label { font-size: 11px; color: #999; }
.sel { position: relative; height: 24px; background: #fff; border: 1px solid #bbb; }
.area { width: 80px; } .term { width: 100px; }
.sel select { appearance: none; width: 100%; height: 22px; border: 0; background: none; padding: 0 4px; }
.sel .tri { position: absolute; right: 4px; top: 8px; pointer-events: none; }
.filters > button { width: 65px; height: 24px; background: #fff; color: #4499ff; }
.filters > button.on { background: #4499ff; color: #fff; }
.lock { margin-left: auto; }
.search { display: flex; width: 202px; height: 26px; background: #e0e0e0; }
.search input { flex: 1; min-width: 0; border: 0; outline: 0; background: none; padding: 0 4px; font-size: 12px; }

.lower { position: relative; flex: 1; min-height: 0; display: flex; }
.cats { flex: 0 0 236px; position: relative; overflow: hidden; }
.cats h3 { margin: 0; height: 32px; padding-left: 12px; line-height: 33px; font-size: 12px; background: #dfdfdf; }
.cats li { height: 28px; display: flex; align-items: center; gap: 7px; padding-left: 13px; font-size: 13px; white-space: nowrap; }
.cats .on { color: #4499ff; }
.cats .thumb { position: absolute; right: 0; top: 71px; width: 10px; height: 30px; border-radius: 5px; background: #c8c8c8; }
.split { flex: 0 0 11px; background: #c8c6c4; padding-top: 64px; }
.split span { display: grid; place-items: center; width: 10px; height: 52px; background: #ff9233; }
.prices { flex: 1; min-width: 0; display: flex; flex-direction: column; background: #fff; border-right: 1px solid #c8c8c8; }
.ptabs { flex: none; height: 23px; background: #f0f0f0; display: flex; border-bottom: 1px solid #c8c8c8; }
.ptabs button { width: 91px; background: #f7f7f7; border-right: 1px solid #c8c8c8; padding-top: 2px; }
.ptabs .on { background: #e3eefd; color: #4499ff; font-weight: 700; padding: 0; }
.ptable { flex: 1; min-height: 0; position: relative; overflow: hidden; background: linear-gradient(#f0f0f0 25px, #fff 25px); }
.ptable table { width: 735px; text-align: center; }
.p65 { width: 65px; } .p145 { width: 145px; } .p45 { width: 45px; } .p80 { width: 80px; } .p50 { width: 50px; }
.ptable th { height: 25px; padding: 0; font-weight: 400; white-space: nowrap; background: #dfdfdf; border: solid #c4c4c4; border-width: 0 1px 1px 0; }
.ptable td { height: 30px; padding: 0; border: solid #e3e3e3; border-width: 0 1px 1px 0; background: #fff; color: #111; }
.ptable td.l { text-align: left; padding-left: 3px; }
.ptable td svg { margin: 0 auto; color: #4499ff; }
.ptable .on td { background: #4499ff; color: #fff; }
.ptable .on svg { color: #fff; }
.seq { display: flex; align-items: center; gap: 15px; padding-left: 3px; }
.badge { width: 22px; height: 17px; line-height: 17px; font-size: 13px; background: #06a3ee; color: #fff; border-radius: 2px 8px 2px 8px; }
.on .badge { background: #fff; color: #2b7fd9; }
.ptable .thumb { position: absolute; right: 1px; top: 6px; width: 9px; height: 30px; border-radius: 5px; background: #c8c8c8; }
.marker { position: absolute; left: 173px; top: 86px; width: 865px; height: 64px; border: 2px solid #ed1c24; pointer-events: none; }

.status { flex: none; height: 34px; display: flex; align-items: center; white-space: nowrap; padding: 0 6px 0 10px; }
.status > span { padding-right: 26px; margin-right: 16px; border-right: 1px solid #9aa0a8; line-height: 20px; }
.view { margin-left: auto; display: flex; align-items: center; gap: 10px; }
.view .box { width: 22px; height: 24px; border: 1px solid #ccc; border-radius: 2px; background: #fff; display: grid; place-items: center; }
.view .bar { height: 26px; }
.pct { margin-left: 8px; }
.view input { appearance: none; width: 106px; height: 14px; margin: 0 4px 0 0; background: linear-gradient(#ccc, #ccc) center / 100% 2px no-repeat; }
.view input::-webkit-slider-thumb { appearance: none; width: 13px; height: 13px; border: 1px solid #666; border-radius: 50%; background: #fff; }
</style>
